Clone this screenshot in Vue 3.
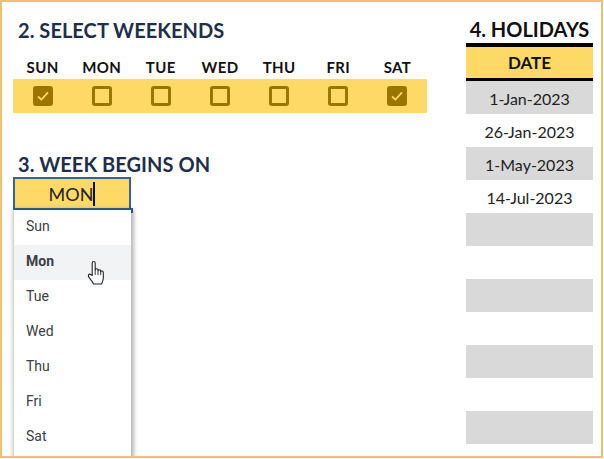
<script setup>
const days = [
  { name: 'SUN', on: true }, { name: 'MON' }, { name: 'TUE' }, { name: 'WED' },
  { name: 'THU' }, { name: 'FRI' }, { name: 'SAT', on: true }
]
const options = ['Sun', 'Mon', 'Tue', 'Wed', 'Thu', 'Fri', 'Sat']
const dates = ['1-Jan-2023', '26-Jan-2023', '1-May-2023', '14-Jul-2023', '', '', '', '', '', '', '']
</script>

<template>
  <div class="frame">
    <div class="left">
      <h2 class="title first">2. SELECT WEEKENDS</h2>
      <div class="week-labels">
        <span v-for="d in days" :key="d.name">{{ d.name }}</span>
      </div>
      <div class="week-boxes">
        <span v-for="d in days" :key="d.name" class="cell">
          <span class="box" :class="{ on: d.on }">
            <svg v-if="d.on" width="14" height="12" viewBox="0 0 14 12">
              <path d="M2 6.5 5.4 9.6 12 2.4" fill="none" stroke="#ffd966" stroke-width="1.7" />
            </svg>
          </span>
        </span>
      </div>
      <h2 class="title second">3. WEEK BEGINS ON</h2>
      <div class="picker">
        <div class="input"><span class="value">MON</span></div>
        <span class="handle"></span>
        <ul class="menu">
          <li v-for="o in options" :key="o" :class="{ active: o === 'Mon' }">{{ o }}</li>
        </ul>
        <svg class="hand" width="18" height="26" viewBox="0 0 18 26">
          <path d="M5.2 15.5V3.2c0-2.2 3-2.2 3 0V10c0-1.6 2.8-1.6 2.8 0v.8c0-1.5 2.7-1.5 2.7.1v1c0-1.4 2.6-1.3 2.6.3v5.6c0 3-1 4.2-1.8 6.2H6.6c-1-2.4-2.8-4-4.6-6.6-1.3-2-.3-3.7 1.2-3.2.8.3 1.4 1 2 1.3Z" fill="#fff" stroke="#222" stroke-width="1.1" stroke-linejoin="round" />
          <path d="M8.2 10v5M11 10.6v4.6M13.7 11.6v3.6" fill="none" stroke="#222" stroke-width="0.9" />
        </svg>
      </div>
    </div>
    <div class="right">
      <h2 class="holidays">4. HOLIDAYS</h2>
      <div class="date-head">DATE</div>
      <div v-for="(d, i) in dates" :key="i" class="date-row">{{ d }}</div>
    </div>
  </div>
</template>

<style>
html, body { margin: 0; background: #fff; }
</style>

<style scoped>
.frame {
  box-sizing: border-box;
  width: 603px;
  height: 458px;
  border: 2px solid #ecc272;
  background: #fff;
  display: flex;
  overflow: hidden;
  font-family: Lato, "Liberation Sans", sans-serif;
}
.left { box-sizing: border-box; width: 425px; padding-left: 11px; flex: none; }
.title {
  margin: 0;
  font-size: 20px;
  line-height: 26px;
  font-weight: 700;
  color: #1f2f4b;
  letter-spacing: 0.05px;
  white-space: nowrap;
}
.first { padding: 15px 0 0 5px; }
.week-labels, .week-boxes {
  display: grid;
  grid-template-columns: repeat(7, 1fr);
  width: 414px;
}
.week-labels {
  margin-top: 13px;
  height: 23px;
  line-height: 23px;
  text-align: center;
  font-size: 15px;
  font-weight: 700;
  color: #111;
  letter-spacing: 0.4px;
}
.week-boxes { height: 34px; background: #ffd966; }
.cell { display: flex; align-items: center; justify-content: center; }
.box {
  box-sizing: border-box;
  width: 20px;
  height: 20px;
  border: 3px solid #9c7400;
  border-radius: 3px;
  display: flex;
  align-items: center;
  justify-content: center;
}
.box.on { background: #9c7400; }
.second { padding: 38px 0 0 5px; }
.picker { position: relative; width: 118px; }
.input {
  box-sizing: border-box;
  height: 33px;
  border: 2px solid #2f659f;
  background: #ffd966;
  display: flex;
  align-items: center;
  justify-content: center;
  font-size: 18px;
  color: #222;
}
.value {
  border-right: 2px solid #111;
  line-height: 24px;
}
.handle {
  position: absolute;
  right: -2px;
  top: 31px;
  width: 5px;
  height: 5px;
  background: #2f659f;
}
.menu {
  position: absolute;
  left: 1px;
  top: 33px;
  width: 117px;
  margin: 0;
  padding: 0 0 30px;
  list-style: none;
  background: #fff;
  box-shadow: 1px 1px 4px 2px rgba(0, 0, 0, 0.28);
  font-family: Roboto, "Liberation Sans", sans-serif;
  font-size: 14px;
  color: #3c4043;
}
.menu li {
  height: 35px;
  line-height: 33px;
  padding-left: 12px;
}
.menu li.active { background: #f1f3f4; font-weight: 700; }
.hand { position: absolute; left: 74px; top: 83px; }
.right { box-sizing: border-box; width: 127px; margin-left: 39px; flex: none; }
.holidays {
  margin: 0;
  height: 41px;
  line-height: 26px;
  padding-top: 14px;
  box-sizing: border-box;
  text-align: center;
  font-size: 20px;
  font-weight: 700;
  color: #111;
  white-space: nowrap;
}
.date-head {
  box-sizing: border-box;
  height: 38px;
  border-top: 4px solid #000;
  border-bottom: 3px solid #000;
  background: #ffd966;
  text-align: center;
  font-size: 17px;
  font-weight: 700;
  line-height: 31px;
  color: #111;
}
.date-row {
  height: 33px;
  line-height: 35px;
  text-align: center;
  font-size: 16px;
  color: #222;
}
.date-row:nth-of-type(even) { background: #d9d9d9; }
</style>
